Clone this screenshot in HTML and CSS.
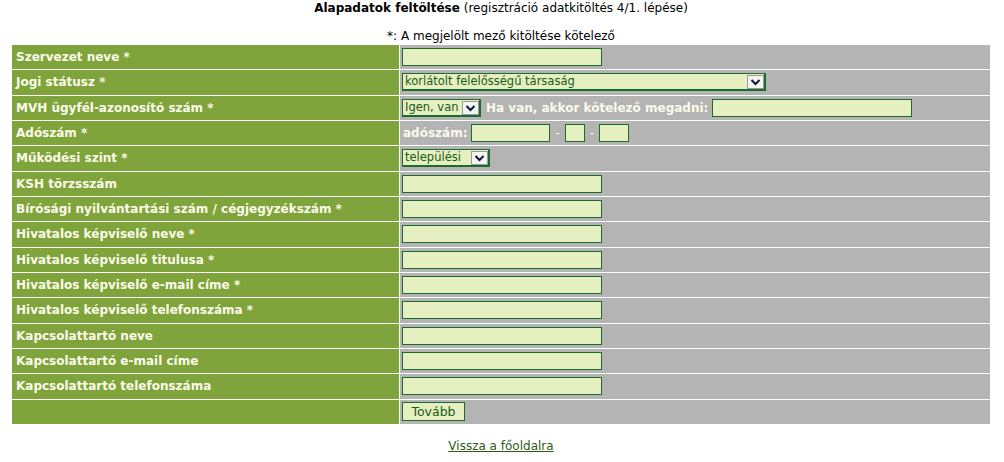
FILE: index.html
```html
<!DOCTYPE html>
<html lang="hu">
<head>
<meta charset="utf-8">
<title>Alapadatok feltöltése</title>
<link rel="stylesheet" href="styles.css">
</head>
<body>
<div class="page">
  <div class="title"><b>Alapadatok feltöltése</b> (regisztráció adatkitöltés 4/1. lépése)</div>
  <div class="note">*: A megjelölt mező kitöltése kötelező</div>
  <table class="form">
    <tr><td class="lbl">Szervezet neve *</td><td class="val"><input class="txt w200" type="text"></td></tr>
    <tr><td class="lbl">Jogi státusz *</td><td class="val"><span class="sel w364"><select><option>korlátolt felelősségű társaság</option></select><svg class="arr" width="17" height="14" viewBox="0 0 17 14"><rect x="0.5" y="0.5" width="16" height="13" fill="#f4f4f2" stroke="#9a9a9a"/><path d="M4.5 5l4 4 4-4" fill="none" stroke="#0c1830" stroke-width="2"/></svg></span></td></tr>
    <tr><td class="lbl">MVH ügyfél-azonosító szám *</td><td class="val"><span class="sel w79"><select><option>Igen, van</option></select><svg class="arr" width="17" height="14" viewBox="0 0 17 14"><rect x="0.5" y="0.5" width="16" height="13" fill="#f4f4f2" stroke="#9a9a9a"/><path d="M4.5 5l4 4 4-4" fill="none" stroke="#0c1830" stroke-width="2"/></svg></span><span class="inl">Ha van, akkor kötelező megadni:</span><input class="txt w200" type="text"></td></tr>
    <tr><td class="lbl">Adószám *</td><td class="val"><span class="inl first">adószám:</span><input class="txt w79" type="text"><span class="dash">-</span><input class="txt w20" type="text"><span class="dash">-</span><input class="txt w30" type="text"></td></tr>
    <tr><td class="lbl">Működési szint *</td><td class="val"><span class="sel w88"><select><option>települési</option></select><svg class="arr" width="17" height="14" viewBox="0 0 17 14"><rect x="0.5" y="0.5" width="16" height="13" fill="#f4f4f2" stroke="#9a9a9a"/><path d="M4.5 5l4 4 4-4" fill="none" stroke="#0c1830" stroke-width="2"/></svg></span></td></tr>
    <tr><td class="lbl">KSH törzsszám</td><td class="val"><input class="txt w200" type="text"></td></tr>
    <tr><td class="lbl">Bírósági nyilvántartási szám / cégjegyzékszám *</td><td class="val"><input class="txt w200" type="text"></td></tr>
    <tr><td class="lbl">Hivatalos képviselő neve *</td><td class="val"><input class="txt w200" type="text"></td></tr>
    <tr><td class="lbl">Hivatalos képviselő titulusa *</td><td class="val"><input class="txt w200" type="text"></td></tr>
    <tr><td class="lbl">Hivatalos képviselő e-mail címe *</td><td class="val"><input class="txt w200" type="text"></td></tr>
    <tr><td class="lbl">Hivatalos képviselő telefonszáma *</td><td class="val"><input class="txt w200" type="text"></td></tr>
    <tr><td class="lbl">Kapcsolattartó neve</td><td class="val"><input class="txt w200" type="text"></td></tr>
    <tr><td class="lbl">Kapcsolattartó e-mail címe</td><td class="val"><input class="txt w200" type="text"></td></tr>
    <tr><td class="lbl">Kapcsolattartó telefonszáma</td><td class="val"><input class="txt w200" type="text"></td></tr>
    <tr><td class="lbl"></td><td class="val"><button class="btn" type="button">Tovább</button></td></tr>
  </table>
  <div class="back"><a href="#">Vissza a főoldalra</a></div>
</div>
</body>
</html>
```

FILE: styles.css
```css
html, body {
  margin: 0;
  padding: 0;
  background: #ffffff;
}

body {
  font-family: "DejaVu Sans", Verdana, sans-serif;
  font-size: 12px;
  color: #000000;
}

.page {
  padding: 0 13px 0 11px;
}

.title {
  text-align: center;
  font-size: 12px;
  line-height: 16px;
  height: 16px;
}

.note {
  text-align: center;
  font-size: 12px;
  line-height: 16px;
  margin-top: 12px;
}

.form {
  width: 980px;
  border-collapse: separate;
  border-spacing: 1px;
  background: #ffffff;
}

.form td {
  height: 24.33px;
  padding: 0;
  vertical-align: middle;
}

.lbl {
  width: 383px;
  background: #80a43c;
  color: #fbfbea;
  font-weight: bold;
  font-size: 12px;
  padding-left: 4px !important;
  white-space: nowrap;
}

.val {
  background: #b4b4b4;
  padding-left: 2px !important;
  font-size: 0;
  white-space: nowrap;
}

.val > * {
  vertical-align: middle;
}

.txt {
  box-sizing: border-box;
  height: 18px;
  margin: 0;
  padding: 0 2px;
  border: 1px solid #1a6b2c;
  background: #e6efc0;
  font-family: "DejaVu Sans", Verdana, sans-serif;
  font-size: 11px;
  color: #1a5a1a;
  outline: none;
}

.w200 { width: 200px; }
.w79 { width: 79px; }
.w20 { width: 20px; }
.w30 { width: 30px; }

.sel {
  position: relative;
  display: inline-block;
  height: 18px;
}

.sel select {
  box-sizing: border-box;
  width: 100%;
  height: 18px;
  margin: 0;
  padding: 0 0 0 2px;
  border: 2px solid #1a6b2c;
  border-top-width: 1px;
  border-left-width: 1px;
  background: #e6efc0;
  font-family: "DejaVu Sans", Verdana, sans-serif;
  font-size: 11.5px;
  line-height: 15px;
  color: #1a5a1a;
  appearance: none;
  -webkit-appearance: none;
  border-radius: 0;
  outline: none;
}

.sel .arr {
  position: absolute;
  right: 2px;
  top: 2px;
  pointer-events: none;
}

.sel.w364 { width: 364px; }
.sel.w79 { width: 79px; }
.sel.w88 { width: 88px; }

.inl {
  display: inline-block;
  font-size: 12px;
  font-weight: bold;
  color: #fbfbea;
  margin: 0 4px 0 5px;
}

.inl.first {
  margin-left: 1px;
}

.dash {
  display: inline-block;
  font-size: 12px;
  color: #fbfbea;
  margin: 0 5px 0 5px;
}

.btn {
  box-sizing: border-box;
  height: 19px;
  width: 63px;
  margin: 0;
  padding: 0;
  border: 1px solid #1a6b2c;
  background: #e6efc0;
  font-family: "DejaVu Sans", Verdana, sans-serif;
  font-size: 12.5px;
  color: #1a5a1a;
  border-radius: 0;
}

.back {
  text-align: center;
  margin-top: 13px;
  font-size: 12px;
  line-height: 16px;
}

.back a {
  color: #2e5a14;
  text-decoration: underline;
}
```
